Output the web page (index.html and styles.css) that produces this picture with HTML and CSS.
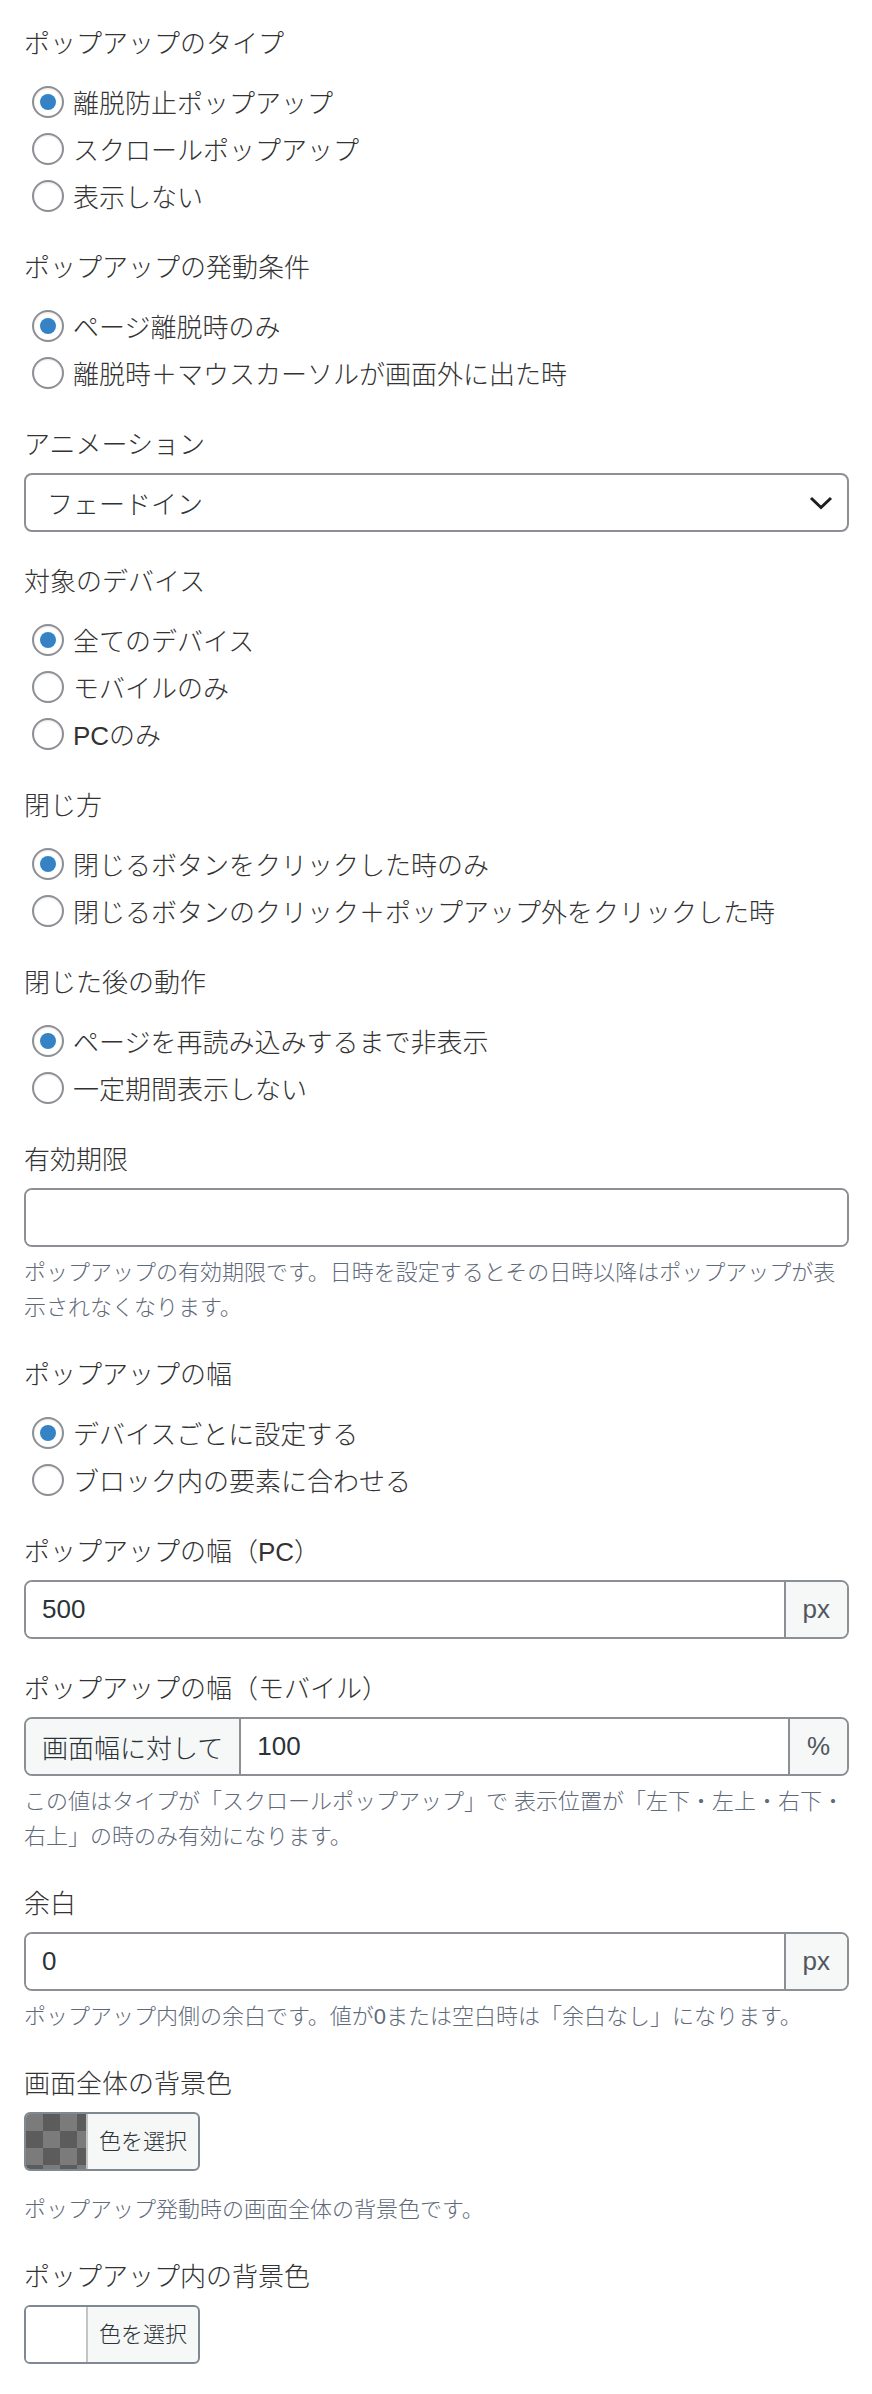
FILE: index.html
```html
<!DOCTYPE html>
<html lang="ja">
<head>
    <meta charset="utf-8">
    <link rel="stylesheet" href="styles.css">
</head>
<body>
   <div class="panel">

    <div class="field field-radio">
        <div class="field-label">ポップアップのタイプ</div>
        <div class="radio-list">
            <label class="radio"><input type="radio" name="type" checked><span>離脱防止ポップアップ</span></label>
            <label class="radio"><input type="radio" name="type"><span>スクロールポップアップ</span></label>
            <label class="radio"><input type="radio" name="type"><span>表示しない</span></label>
        </div>
    </div>

    <div class="field field-radio">
        <div class="field-label">ポップアップの発動条件</div>
        <div class="radio-list">
            <label class="radio"><input type="radio" name="trigger" checked><span>ページ離脱時のみ</span></label>
            <label class="radio"><input type="radio" name="trigger"><span>離脱時＋マウスカーソルが画面外に出た時</span></label>
        </div>
    </div>

    <div class="field">
        <div class="field-label">アニメーション</div>
        <div class="select">
            <span>フェードイン</span>
            <svg class="chevron" width="24" height="14" viewBox="0 0 24 14">
                <polyline points="2,2 12,11.5 22,2" fill="none" stroke="#1e1e1e" stroke-width="3"/>
            </svg>
        </div>
    </div>

    <div class="field field-radio">
        <div class="field-label">対象のデバイス</div>
        <div class="radio-list">
            <label class="radio"><input type="radio" name="device" checked><span>全てのデバイス</span></label>
            <label class="radio"><input type="radio" name="device"><span>モバイルのみ</span></label>
            <label class="radio"><input type="radio" name="device"><span>PCのみ</span></label>
        </div>
    </div>

    <div class="field field-radio">
        <div class="field-label">閉じ方</div>
        <div class="radio-list">
            <label class="radio"><input type="radio" name="close" checked><span>閉じるボタンをクリックした時のみ</span></label>
            <label class="radio"><input type="radio" name="close"><span>閉じるボタンのクリック＋ポップアップ外をクリックした時</span></label>
        </div>
    </div>

    <div class="field field-radio">
        <div class="field-label">閉じた後の動作</div>
        <div class="radio-list">
            <label class="radio"><input type="radio" name="after" checked><span>ページを再読み込みするまで非表示</span></label>
            <label class="radio"><input type="radio" name="after"><span>一定期間表示しない</span></label>
        </div>
    </div>

    <div class="field">
        <div class="field-label">有効期限</div>
        <div class="input-group">
            <input type="text" class="text-input">
        </div>
        <p class="help">ポップアップの有効期限です。日時を設定するとその日時以降はポップアップが表示されなくなります。</p>
    </div>

    <div class="field field-radio">
        <div class="field-label">ポップアップの幅</div>
        <div class="radio-list">
            <label class="radio"><input type="radio" name="width" checked><span>デバイスごとに設定する</span></label>
            <label class="radio"><input type="radio" name="width"><span>ブロック内の要素に合わせる</span></label>
        </div>
    </div>

    <div class="field">
        <div class="field-label">ポップアップの幅（PC）</div>
        <div class="input-group">
            <input type="text" class="text-input" value="500">
            <span class="addon">px</span>
        </div>
    </div>

    <div class="field">
        <div class="field-label">ポップアップの幅（モバイル）</div>
        <div class="input-group">
            <span class="addon addon-prefix">画面幅に対して</span>
            <input type="text" class="text-input" value="100">
            <span class="addon">%</span>
        </div>
        <p class="help">この値はタイプが「スクロールポップアップ」で 表示位置が「左下・左上・右下・右上」の時のみ有効になります。</p>
    </div>

    <div class="field">
        <div class="field-label">余白</div>
        <div class="input-group">
            <input type="text" class="text-input" value="0">
            <span class="addon">px</span>
        </div>
        <p class="help">ポップアップ内側の余白です。値が0または空白時は「余白なし」になります。</p>
    </div>

    <div class="field">
        <div class="field-label">画面全体の背景色</div>
        <button type="button" class="color-btn">
            <span class="swatch swatch-checker"></span>
            <span class="color-btn-text">色を選択</span>
        </button>
        <p class="help help-color">ポップアップ発動時の画面全体の背景色です。</p>
    </div>

    <div class="field field-last">
        <div class="field-label">ポップアップ内の背景色</div>
        <button type="button" class="color-btn">
            <span class="swatch"></span>
            <span class="color-btn-text">色を選択</span>
        </button>
    </div>

   </div>
</body>
</html>
```

FILE: styles.css
```css
/* Popup settings sidebar */
body {
    margin: 0;
    background: #fff;
    font-family: "Liberation Sans", "Noto Sans CJK JP", sans-serif;
    font-weight: 300;
    color: #2c3338;
}

.panel {
    padding: 26px 23px 29px 24px;
}

.field {
    margin-bottom: 32px;
}

.field-radio {
    margin-bottom: 31px;
}

.field-last {
    margin-bottom: 0;
}

.field-label {
    font-size: 26px;
    line-height: 36px;
    margin-bottom: 10px;
    color: #333;
}

/* radios */
.radio-list {
    padding-top: 6px;
}

.radio {
    display: flex;
    align-items: center;
    gap: 9px;
    height: 47px;
    padding-left: 8px;
    font-size: 26px;
    color: #333;
}

.radio input {
    appearance: none;
    -webkit-appearance: none;
    margin: 0;
    width: 32px;
    height: 32px;
    flex: none;
    border: 2px solid #8c8f94;
    border-radius: 50%;
    background: #fff;
    box-shadow: inset 0 1px 2px rgba(0, 0, 0, 0.1);
    display: grid;
    place-items: center;
}

.radio input:checked::before {
    content: "";
    width: 16px;
    height: 16px;
    border-radius: 50%;
    background: #3582c4;
}

/* select */
.select {
    display: flex;
    align-items: center;
    justify-content: space-between;
    box-sizing: border-box;
    height: 59px;
    padding: 0 14px 0 21px;
    border: 2px solid #8c8f94;
    border-radius: 8px;
    font-size: 26px;
}

.chevron {
    display: block;
}

/* text inputs */
.input-group {
    display: flex;
    box-sizing: border-box;
    height: 59px;
    border: 2px solid #8c8f94;
    border-radius: 8px;
    overflow: hidden;
}

.text-input {
    flex: 1;
    min-width: 0;
    border: none;
    outline: none;
    padding: 0 16px;
    font-family: inherit;
    font-weight: 400;
    font-size: 26px;
    color: #2c3338;
    background: #fff;
}

.addon {
    display: flex;
    align-items: center;
    padding: 0 17px;
    background: #f6f7f7;
    border-left: 2px solid #8c8f94;
    font-size: 26px;
    color: #50575e;
}

.addon-prefix {
    border-left: none;
    border-right: 2px solid #8c8f94;
    padding: 0 16px;
    color: #2c3338;
}

.help {
    margin: 8px 0 0;
    font-size: 22px;
    line-height: 35px;
    color: #5f6a7a;
}

.help-color {
    margin-top: 21px;
}

/* color picker button */
.color-btn {
    display: flex;
    box-sizing: border-box;
    height: 59px;
    padding: 0;
    border: 2px solid #7e8993;
    border-radius: 6px;
    background: #f6f7f7;
    overflow: hidden;
    cursor: pointer;
    font-family: inherit;
    font-weight: 300;
}

.swatch {
    width: 60px;
    height: 100%;
    background: #fff;
    border-right: 2px solid #c3c4c7;
}

.swatch-checker {
    background: conic-gradient(#5c5c5c 25%, #7b7b7b 0 50%, #5c5c5c 0 75%, #7b7b7b 0);
    background-size: 34px 34px;
}

.color-btn-text {
    padding: 0 11px;
    font-size: 22px;
    line-height: 55px;
    color: #2c3338;
}
```
